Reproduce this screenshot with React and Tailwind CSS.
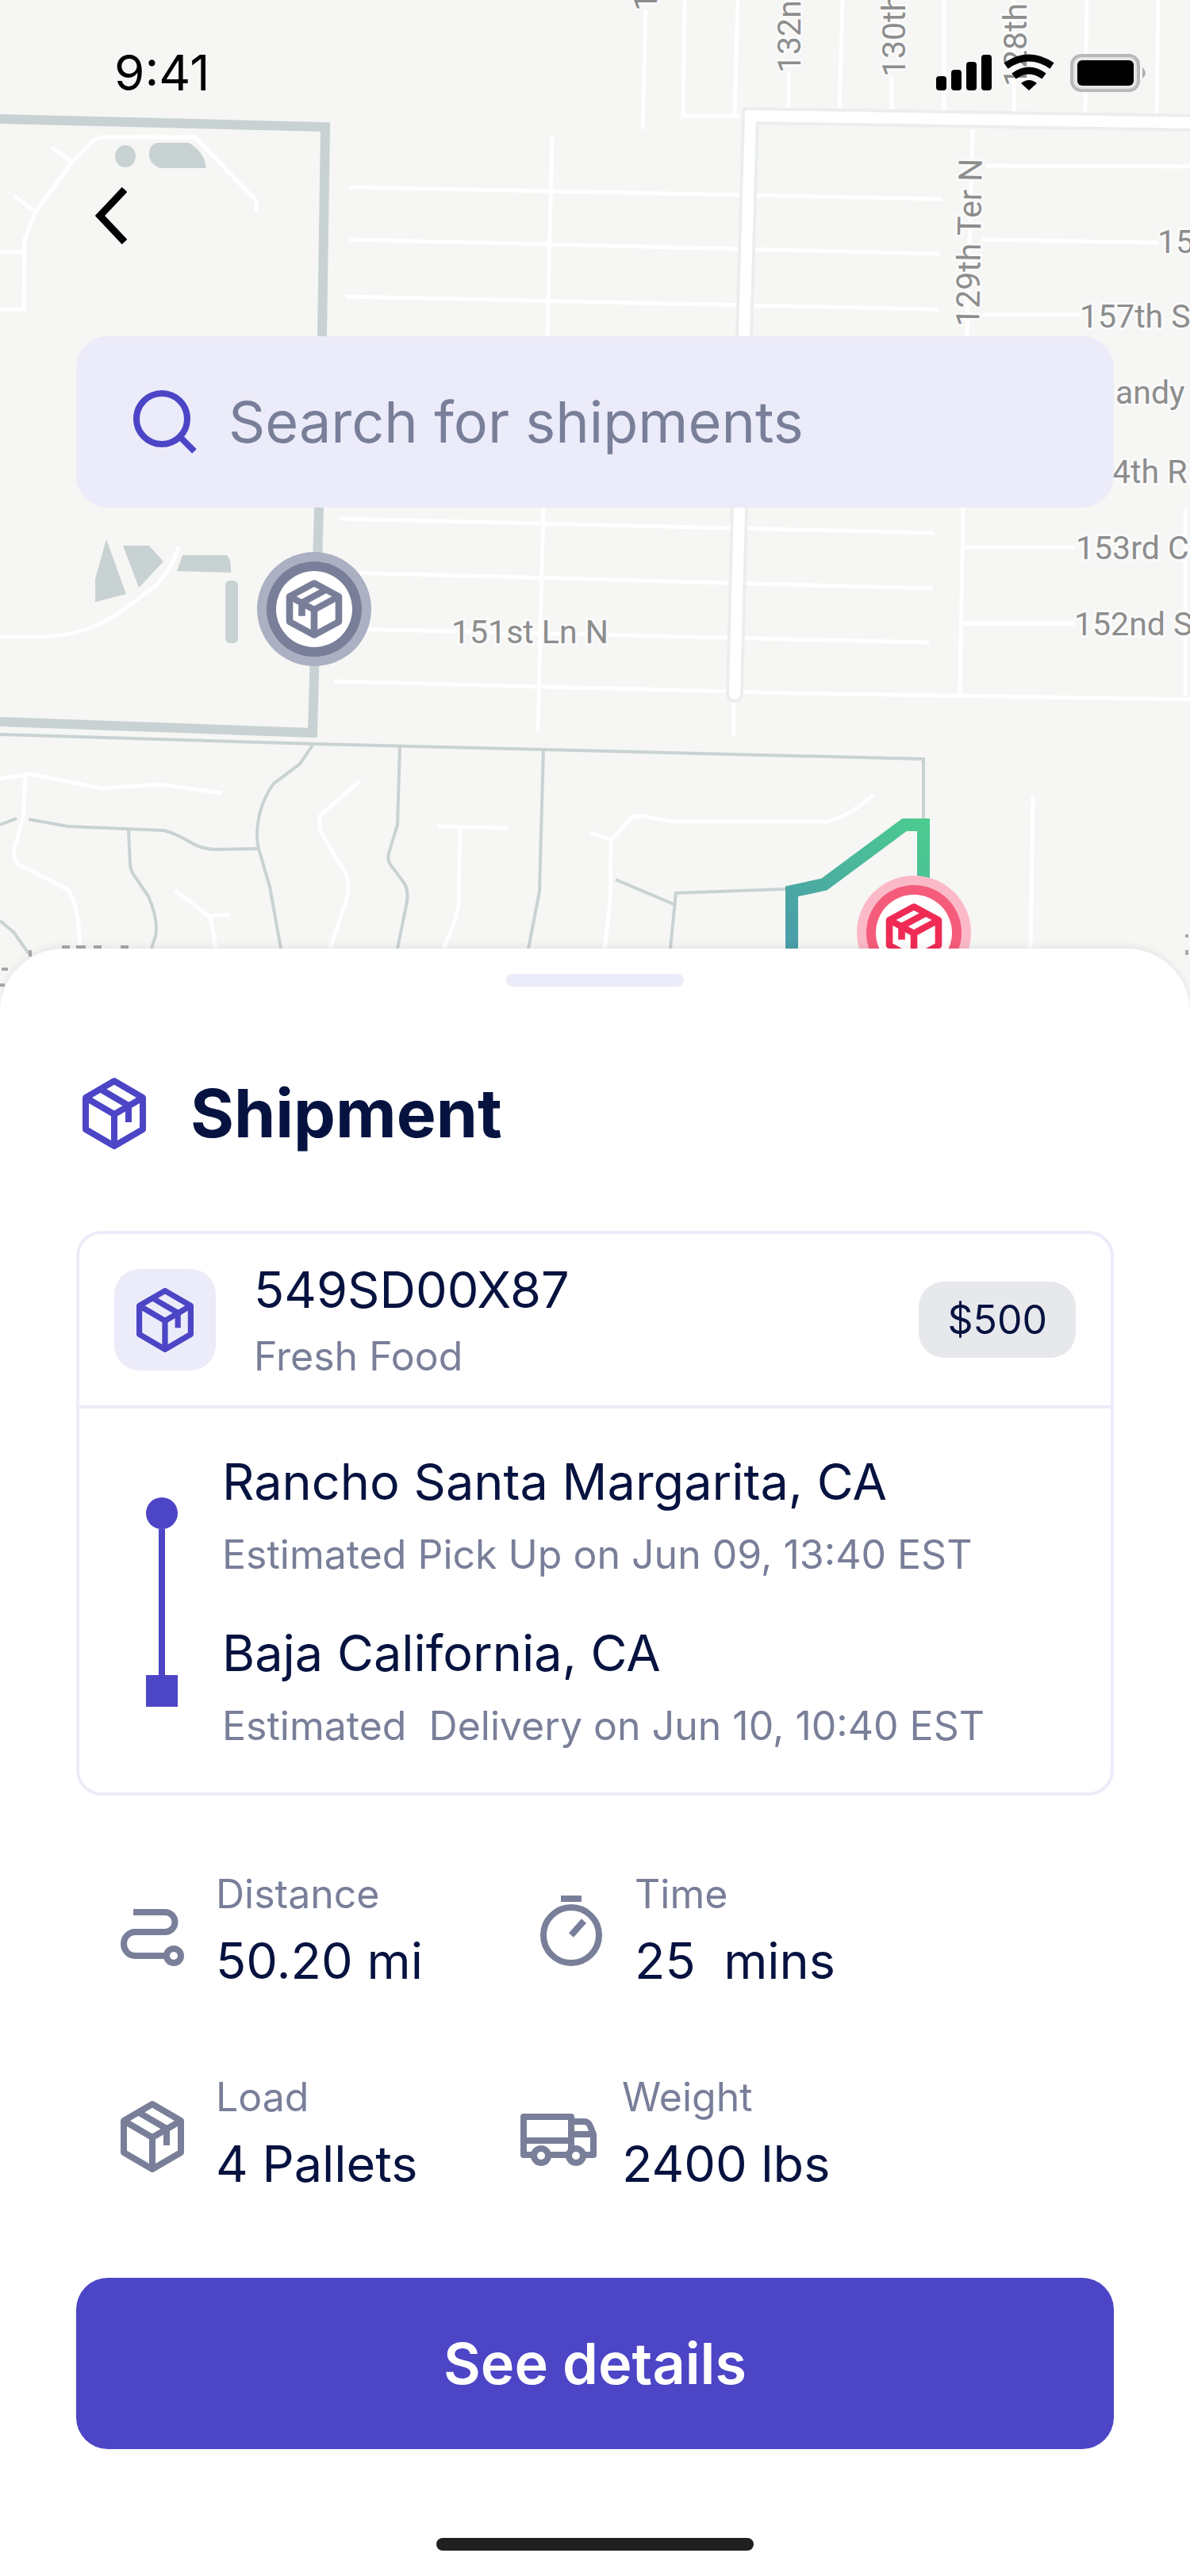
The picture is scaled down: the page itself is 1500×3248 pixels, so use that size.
import React, { useState } from 'react';

const stats = [
  { label: 'Distance', value: '50.20 mi', icon: 'distance', spacing: 'gap-10' },
  { label: 'Time', value: '25  mins', icon: 'timer', spacing: 'gap-10 pl-6' },
  { label: 'Load', value: '4 Pallets', icon: 'box', spacing: 'gap-10' },
  { label: 'Weight', value: '2400 lbs', icon: 'truck', spacing: 'gap-8' },
];

const stops = [
  { city: 'Rancho Santa Margarita, CA', note: 'Estimated Pick Up on Jun 09, 13:40 EST' },
  { city: 'Baja California, CA', note: 'Estimated  Delivery on Jun 10, 10:40 EST' },
];

const BoxPaths = () => (
  <>
    <path d="M40 5 76 26V66L40 87 4 66V26Z" />
    <path d="M4 26 40 47 76 26M40 47V87" />
    <path d="M22 15 58 36V57" />
  </>
);

const BoxIcon = ({ className }) => (
  <svg viewBox="0 0 80 92" className={className} fill="none" stroke="currentColor" strokeWidth="8" strokeLinejoin="round" aria-hidden="true">
    <BoxPaths />
  </svg>
);

const DistanceIcon = () => (
  <svg viewBox="0 -18 80 92" className="w-20 shrink-0" fill="none" stroke="currentColor" strokeWidth="8" aria-hidden="true">
    <path d="M16 5H56A12 12 0 0 1 56 30H18A14 15 0 0 0 18 60H58" />
    <circle cx="67" cy="60" r="9" />
  </svg>
);

const TimerIcon = () => (
  <svg viewBox="0 0 80 92" className="w-20 shrink-0" fill="none" stroke="currentColor" strokeWidth="8" aria-hidden="true">
    <circle cx="40" cy="52" r="35" />
    <path d="M27 6H53M40 52 56 34" />
  </svg>
);

const TruckIcon = () => (
  <svg viewBox="0 -20 96 90" className="w-24 shrink-0" fill="none" stroke="currentColor" strokeWidth="8" strokeLinejoin="round" aria-hidden="true">
    <path d="M4 4H64V52H4ZM4 34H64" />
    <path d="M64 10H80Q86 10 88 16L92 26V52H64M64 26H92" />
    <circle cx="26" cy="53" r="9" fill="white" />
    <circle cx="70" cy="53" r="9" fill="white" />
  </svg>
);

const StatIcon = ({ name }) => {
  if (name === 'distance') return <DistanceIcon />;
  if (name === 'timer') return <TimerIcon />;
  if (name === 'truck') return <TruckIcon />;
  return <BoxIcon className="mt-2 w-20 shrink-0" />;
};

// Package pin, tape drawn on the left side of the box
const Pin = ({ x, y, halo, ring, icon }) => (
  <g transform={`translate(${x} ${y})`}>
    <circle r="72" fill={halo} />
    <circle r="60" fill={ring} />
    <circle r="48" fill="white" />
    <g transform="scale(-0.86 0.8) translate(-40 -46)" fill="none" stroke={icon} strokeWidth="10" strokeLinejoin="round">
      <BoxPaths />
    </g>
  </g>
);

const MapView = () => (
  <svg viewBox="0 0 1500 1276" className="col-start-1 row-start-1 block w-full bg-[#f6f6f4]" role="img" aria-label="Map">
    <defs>
      <linearGradient id="route" gradientUnits="userSpaceOnUse" x1="1164" y1="1040" x2="998" y2="1180">
        <stop offset="0" stopColor="#4bcb90" />
        <stop offset="1" stopColor="#4a9fa8" />
      </linearGradient>
    </defs>

    {/* Water */}
    <g fill="#c9d2d3">
      <ellipse cx="158" cy="197" rx="13" ry="14" />
      <path d="M198 180H238Q258 192 260 212H202Q188 206 188 196Q188 182 198 180Z" />
      <path d="M134 680 120 730V759L159 749Z" />
      <path d="M155 688H188L206 708 175 741Z" />
      <path d="M230 700H286Q292 706 291 722L223 720Z" />
      <rect x="284" y="732" width="16" height="79" rx="6" />
    </g>

    {/* Side streets */}
    <g fill="none" stroke="white" strokeWidth="5">
      <path d="M0 390H30L31 302 45 267 91 204 117 178 127 173H246L323 253V268M0 318H30M65 186 91 204M18 247 45 267" />
      <path d="M440 236 1188 251M440 302 1185 320M436 374 1183 390M428 654 1178 672M440 722 1176 742M440 793 1171 810M421 859 1000 874 1500 882" />
      <path d="M696 171 690 424 685 640 678 922" />
      <path d="M814 12 810 163M863 0 861 146H932M930 0 926 143M994 90V137M1062 0 1058 139M1124 96V141M1190 0V143M1278 0V145M1370 0 1368 145M1460 0 1458 145" />
      <path d="M1226 163 1219 424 1214 640 1210 876M1243 209 1500 210M1238 302 1460 306M1238 397H1362M1216 690H1355M1214 786H1355M1494 640V877M925 880V928" />
      <path d="M0 803H38Q80 804 110 793 140 782 163 763L195 740Q220 712 225 689" />
      <path d="M0 982 38 976 129 994 201 989 280 1000M32 979 29 1032 18 1070Q16 1085 24 1090L86 1122Q100 1145 101 1196" />
      <path d="M454 984 404 1028Q400 1036 406 1052L436 1102Q442 1120 436 1136L416 1196" />
      <path d="M551 1042 641 1044M580 1042 578 1140 574 1160 559 1196M220 1122 263 1155 289 1153M265 1155 272 1196" />
      <path d="M744 1050 771 1059 795 1032Q803 1027 815 1030L850 1036H1042Q1070 1030 1101 1002M770 1059 769 1138 762 1196M1302 1004 1299 1196" />
    </g>

    {/* Park border and creeks */}
    <path d="M0 150 410 160 406 424 402 640 394 924 0 910" fill="none" stroke="#c9d2d3" strokeWidth="12" />
    <g fill="none" stroke="#c9d2d3" strokeWidth="4">
      <path d="M0 926 397 938 1164 957V1036" />
      <path d="M395 938 378 963 344 989Q330 1010 326 1032 322 1055 326 1070L340 1118 354 1196" />
      <path d="M504 942 501 1040 490 1076Q488 1084 492 1090L510 1114Q516 1126 512 1142L501 1196" />
      <path d="M685 945 680 1124 666 1196" />
      <path d="M0 1040 21 1032M36 1033 86 1042 206 1047Q220 1050 240 1062 256 1072 275 1071L325 1070" />
      <path d="M162 1047 164 1090Q164 1098 172 1108L187 1130Q200 1160 196 1180L191 1196M0 1161 17 1175 36 1202" />
      <path d="M776 1109 849 1140M845 1196 852 1126 991 1121" />
    </g>

    {/* Main road */}
    <g fill="none" strokeLinecap="round">
      <path d="M1510 155 946 146 938 424 932 640 926 875" stroke="#eaefed" strokeWidth="22" />
      <path d="M1510 155 946 146 938 424 932 640 926 875" stroke="white" strokeWidth="14" />
    </g>

    {/* Street names */}
    <g fontFamily="Roboto, sans-serif" fontSize="41" fill="#8d8d8d" stroke="#fafafa" strokeWidth="6" paintOrder="stroke">
      <text transform="translate(828 14) rotate(-90)">1</text>
      <text transform="translate(1009 92) rotate(-90)">132nd</text>
      <text transform="translate(1141 97) rotate(-90)">130th</text>
      <text transform="translate(1294 109) rotate(-90)">128th</text>
      <text transform="translate(1234 412) rotate(-89)">129th Ter N</text>
      <text x="1459" y="319">15</text>
      <text x="1361" y="413">157th S</text>
      <text x="1406" y="509">andy</text>
      <text x="1402" y="609">4th R</text>
      <text x="1356" y="705">153rd C</text>
      <text x="1354" y="801">152nd S</text>
      <text x="569" y="811">151st Ln N</text>
    </g>
    <path d="M78 1194H88M96 1194H108M118 1194H128M152 1194H162M38 1198V1206M2 1222H10M0 1242H6M1496 1178V1182M1496 1198V1204" stroke="#a8a8a8" strokeWidth="4" />

    <path d="M998 1200V1124L1039 1115 1140 1040H1164V1130" fill="none" stroke="url(#route)" strokeWidth="16" />
    <Pin x={396} y={768} halo="#abb0c2" ring="#797f99" icon="#797f99" />
    <Pin x={1152} y={1176} halo="#fbb9c8" ring="#f55c7b" icon="#ef2b55" />
  </svg>
);

const StatusBar = () => (
  <div className="flex h-46 items-center justify-between pl-36 pr-13">
    <span className="text-[62px] leading-20 text-black">9:41</span>
    <svg viewBox="0 0 268 48" className="w-[268px]" aria-hidden="true">
      <rect x="0" y="28" width="13" height="18" rx="4" />
      <rect x="19" y="20" width="13" height="26" rx="4" />
      <rect x="38" y="10" width="13" height="36" rx="4" />
      <rect x="57" y="1" width="13" height="45" rx="4" />
      <g fill="none" stroke="black" strokeWidth="9">
        <path d="M88 15Q117 -5 146 15" />
        <path d="M98 28Q117 14 136 28" />
      </g>
      <path d="M107 37Q117 29 127 37L117 46Z" />
      <rect x="171" y="2" width="84" height="44" rx="12" fill="#e6e6e4" stroke="#b9b9b9" strokeWidth="4" />
      <rect x="178" y="8" width="71" height="32" rx="6" />
      <path d="M260 17Q268 24 260 31Z" fill="#b0b0b0" />
    </svg>
  </div>
);

const App = () => {
  const [searchTerm, setSearchTerm] = useState('');

  return (
    <div className="bg-white font-['Inter',sans-serif] text-[#06123f]">
      <header className="grid">
        <MapView />

        <div className="z-10 col-start-1 row-start-1">
          <StatusBar />

          <button type="button" aria-label="Back" className="ml-24 mt-8 block px-6 py-5 text-black">
            <svg viewBox="0 0 40 72" className="w-10" fill="none" stroke="currentColor" strokeWidth="9" aria-hidden="true">
              <path d="M37 3 6 36 37 69" />
            </svg>
          </button>

          {/* Search Bar */}
          <label className="mx-24 mt-24 flex h-54 items-center gap-10 rounded-[40px] bg-[#ecebf9] px-18">
            <svg viewBox="0 0 80 80" className="w-20 shrink-0 text-[#4c45c6]" fill="none" stroke="currentColor" strokeWidth="8" aria-hidden="true">
              <circle cx="36" cy="36" r="32" />
              <path d="M58 58 77 77" />
            </svg>
            <input
              type="text"
              aria-label="Search for shipments"
              value={searchTerm}
              onChange={(e) => setSearchTerm(e.target.value)}
              placeholder="Search for shipments"
              className="w-full bg-transparent text-[72px] leading-24 outline-none placeholder:text-[#797f99]"
            />
          </label>
        </div>
      </header>

      <main className="relative z-20 -mt-20 rounded-t-[80px] bg-white px-24 pb-8 pt-8 shadow-[0_-4px_8px_rgba(0,0,0,0.06)]">
        <div className="mx-auto h-4 w-56 rounded-lg bg-[#ecebf9]" />

        <h1 className="mt-28 flex items-center gap-14 pl-2 text-[84px] font-bold leading-24">
          <BoxIcon className="w-20 text-[#4c45c6]" />
          Shipment
        </h1>

        <section className="mt-25 rounded-[32px] border-4 border-[#ecebf9]">
          <div className="flex h-55 items-center border-b-4 border-[#ecebf9] px-11">
            <div className="flex size-32 items-center justify-center rounded-[32px] bg-[#ecebf9]">
              <BoxIcon className="w-18 text-[#4c45c6]" />
            </div>
            <div className="ml-12 flex flex-col gap-3">
              <h2 className="text-[63px] leading-20">549SD00X87</h2>
              <p className="text-[50px] leading-16 text-[#797f99]">Fresh Food</p>
            </div>
            <span className="ml-auto rounded-[32px] bg-[#e6e8ec] px-9 text-[50px] leading-24">$500</span>
          </div>

          {/* Route */}
          <div className="flex gap-14 pb-13 pl-21 pt-13">
            <div className="mb-14 mt-15 flex flex-col items-center text-[#4c45c6]">
              <span className="size-10 rounded-full bg-current" />
              <span className="w-2 grow bg-current" />
              <span className="size-10 bg-current" />
            </div>
            <ol className="flex flex-col gap-13">
              {stops.map((stop) => (
                <li key={stop.city} className="flex flex-col gap-5">
                  <h3 className="text-[63px] leading-20">{stop.city}</h3>
                  <p className="whitespace-pre text-[50px] leading-16 text-[#797f99]">{stop.note}</p>
                </li>
              ))}
            </ol>
          </div>
        </section>

        <dl className="mt-23 grid grid-cols-[504px_1fr] gap-y-25 pl-14">
          {stats.map((stat) => (
            <div key={stat.label} className={`flex items-center text-[#797f99] ${stat.spacing}`}>
              <StatIcon name={stat.icon} />
              <div className="flex flex-col gap-3">
                <dt className="text-[50px] leading-16">{stat.label}</dt>
                <dd className="whitespace-pre text-[63px] leading-20 text-[#06123f]">{stat.value}</dd>
              </div>
            </div>
          ))}
        </dl>

        <button type="button" className="mt-26 h-54 w-full rounded-[40px] bg-[#4c45c6] text-[72px] font-semibold leading-24 text-white">
          See details
        </button>

        <div className="mx-auto mt-28 h-4 w-100 rounded-lg bg-[#202020]" />
      </main>
    </div>
  );
};

export default App;
